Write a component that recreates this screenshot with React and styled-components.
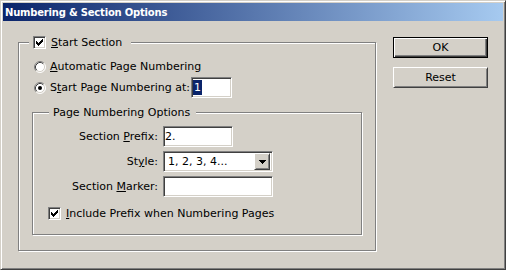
import React from 'react';
import styled, { createGlobalStyle, css } from 'styled-components';

const GlobalStyle = createGlobalStyle`
  html, body {
    margin: 0;
    padding: 0;
    background: #d4d0c8;
  }
  body {
    font-family: "DejaVu Sans", Tahoma, sans-serif;
    font-size: 11px;
    line-height: 13px;
    color: #000;
  }
`;

const sunken = css`
  box-sizing: border-box;
  border: 1px solid;
  border-color: #808080 #fff #fff #808080;
  box-shadow: inset 1px 1px 0 #404040, inset -1px -1px 0 #d4d0c8;
  background: #fff;
`;

const raised = css`
  box-sizing: border-box;
  border: 1px solid;
  border-color: #fff #404040 #404040 #fff;
  box-shadow: inset 1px 1px 0 #d4d0c8, inset -1px -1px 0 #808080;
  background: #d4d0c8;
`;

const Window = styled.div`
  box-sizing: border-box;
  width: 506px;
  height: 270px;
  display: flex;
  flex-direction: column;
  background: #d4d0c8;
  border: 1px solid;
  border-color: #d4d0c8 #404040 #404040 #d4d0c8;
  box-shadow: inset 1px 1px 0 #fff, inset -1px -1px 0 #808080;
  padding: 2px;
`;

const TitleBar = styled.div`
  height: 18px;
  display: flex;
  align-items: center;
  padding-left: 2px;
  background: linear-gradient(to right, #0a246a, #a6caf0);
  color: #fff;
  font-weight: bold;
  font-size: 10px;
  letter-spacing: -0.2px;
`;

const Body = styled.div`
  flex: 1;
  display: flex;
  align-items: flex-start;
  padding: 16px 0 0 15px;
`;

const GroupBox = styled.div`
  box-sizing: border-box;
  width: ${(p) => p.$width}px;
  margin: ${(p) => p.$margin};
  display: flex;
  flex-direction: column;
  align-items: flex-start;
  border: 1px solid #808080;
  box-shadow: inset 1px 1px 0 #fff, 1px 1px 0 #fff;
`;

const Legend = styled.div`
  display: flex;
  align-items: center;
  height: 13px;
  margin: -7px 0 0 ${(p) => p.$indent}px;
  padding: 0 ${(p) => p.$padRight}px 0 4px;
  background: #d4d0c8;
`;

const CheckRow = styled.div`
  display: flex;
  align-items: center;
  gap: 5px;
  margin: ${(p) => p.$margin || '0'};
`;

const Box = styled.span`
  ${sunken}
  display: block;
  width: 13px;
  height: 13px;
  padding: 2px;
  svg {
    display: block;
  }
`;

const RadioRow = styled.div`
  display: flex;
  align-items: center;
  gap: 4px;
  height: 21px;
  padding-left: 15px;
  margin-top: ${(p) => p.$top || 0}px;
  svg {
    display: block;
  }
`;

const FieldGrid = styled.div`
  display: grid;
  grid-template-columns: 125px auto;
  column-gap: 5px;
  row-gap: 4px;
  align-items: center;
  margin-top: 7px;
`;

const FieldLabel = styled.span`
  text-align: right;
`;

const TextBox = styled.div`
  ${sunken}
  width: ${(p) => p.$width}px;
  height: 21px;
  display: flex;
  align-items: center;
  padding-left: ${(p) => p.$pad ?? 1}px;
  margin-left: ${(p) => p.$gap || 0}px;
`;

const Selected = styled.span`
  background: #0a246a;
  color: #fff;
  line-height: 15px;
  padding: 0 1px;
`;

const Select = styled.div`
  ${sunken}
  width: 110px;
  height: 21px;
  display: flex;
  align-items: center;
  padding: 2px 2px 2px 4px;
`;

const SelectValue = styled.span`
  flex: 1;
`;

const DropButton = styled.span`
  ${raised}
  width: 16px;
  height: 17px;
  display: flex;
  align-items: center;
  justify-content: center;
  svg {
    display: block;
  }
`;

const ButtonColumn = styled.div`
  display: flex;
  flex-direction: column;
  gap: 9px;
  margin-left: 17px;
`;

const Button = styled.button`
  ${raised}
  width: 95px;
  height: 21px;
  padding: 0;
  font: inherit;
  color: #000;
  ${(p) =>
    p.$default &&
    css`
      border: 1px solid #000;
      box-shadow: inset 1px 1px 0 #fff, inset -1px -1px 0 #404040,
        inset -2px -2px 0 #808080;
    `}
`;

const CheckMark = () => (
  <svg width="7" height="7" viewBox="0 0 7 7" shapeRendering="crispEdges">
    <path
      d="M0 2h1v3H0zM1 3h1v3H1zM2 4h1v3H2zM3 3h1v3H3zM4 2h1v3H4zM5 1h1v3H5zM6 0h1v3H6z"
      fill="#000"
    />
  </svg>
);

const Checkbox = () => (
  <Box>
    <CheckMark />
  </Box>
);

const Radio = ({ checked }) => (
  <svg width="12" height="12" viewBox="0 0 12 12">
    <circle cx="6" cy="6" r="5" fill="#fff" />
    <path d="M2.11 9.89A5.5 5.5 0 0 1 9.89 2.11" fill="none" stroke="#808080" />
    <path d="M9.89 2.11A5.5 5.5 0 0 1 2.11 9.89" fill="none" stroke="#fff" />
    <path d="M2.82 9.18A4.5 4.5 0 0 1 9.18 2.82" fill="none" stroke="#404040" />
    <path d="M9.18 2.82A4.5 4.5 0 0 1 2.82 9.18" fill="none" stroke="#d4d0c8" />
    {checked && <circle cx="6" cy="6" r="2" fill="#000" />}
  </svg>
);

const Arrow = () => (
  <svg width="7" height="4" viewBox="0 0 7 4" shapeRendering="crispEdges">
    <path d="M0 0h7v1H0zM1 1h5v1H1zM2 2h3v1H2zM3 3h1v1H3z" fill="#000" />
  </svg>
);

export default function App() {
  return (
    <>
      <GlobalStyle />
      <Window>
        <TitleBar>Numbering &amp; Section Options</TitleBar>
        <Body>
          <GroupBox $width={358} $margin="5px 0 0 0">
            <Legend $indent={10} $padRight={9}>
              <CheckRow>
                <Checkbox />
                <span>
                  <u>S</u>tart Section
                </span>
              </CheckRow>
            </Legend>
            <RadioRow $top={7}>
              <Radio />
              <span>
                <u>A</u>utomatic Page Numbering
              </span>
            </RadioRow>
            <RadioRow>
              <Radio checked />
              <span>
                S<u>t</u>art Page Numbering at:
              </span>
              <TextBox $width={41} $gap={-3}>
                <Selected>1</Selected>
              </TextBox>
            </RadioRow>
            <GroupBox $width={330} $margin="14px 13px 15px 13px">
              <Legend $indent={16} $padRight={6}>
                Page Numbering Options
              </Legend>
              <FieldGrid>
                <FieldLabel>
                  Section <u>P</u>refix:
                </FieldLabel>
                <TextBox $width={70}>2.</TextBox>
                <FieldLabel>
                  St<u>y</u>le:
                </FieldLabel>
                <Select>
                  <SelectValue>1, 2, 3, 4...</SelectValue>
                  <DropButton>
                    <Arrow />
                  </DropButton>
                </Select>
                <FieldLabel>
                  Section <u>M</u>arker:
                </FieldLabel>
                <TextBox $width={110} />
              </FieldGrid>
              <CheckRow $margin="10px 0 14px 15px">
                <Checkbox />
                <span>
                  <u>I</u>nclude Prefix when Numbering Pages
                </span>
              </CheckRow>
            </GroupBox>
          </GroupBox>
          <ButtonColumn>
            <Button $default>OK</Button>
            <Button>Reset</Button>
          </ButtonColumn>
        </Body>
      </Window>
    </>
  );
}
